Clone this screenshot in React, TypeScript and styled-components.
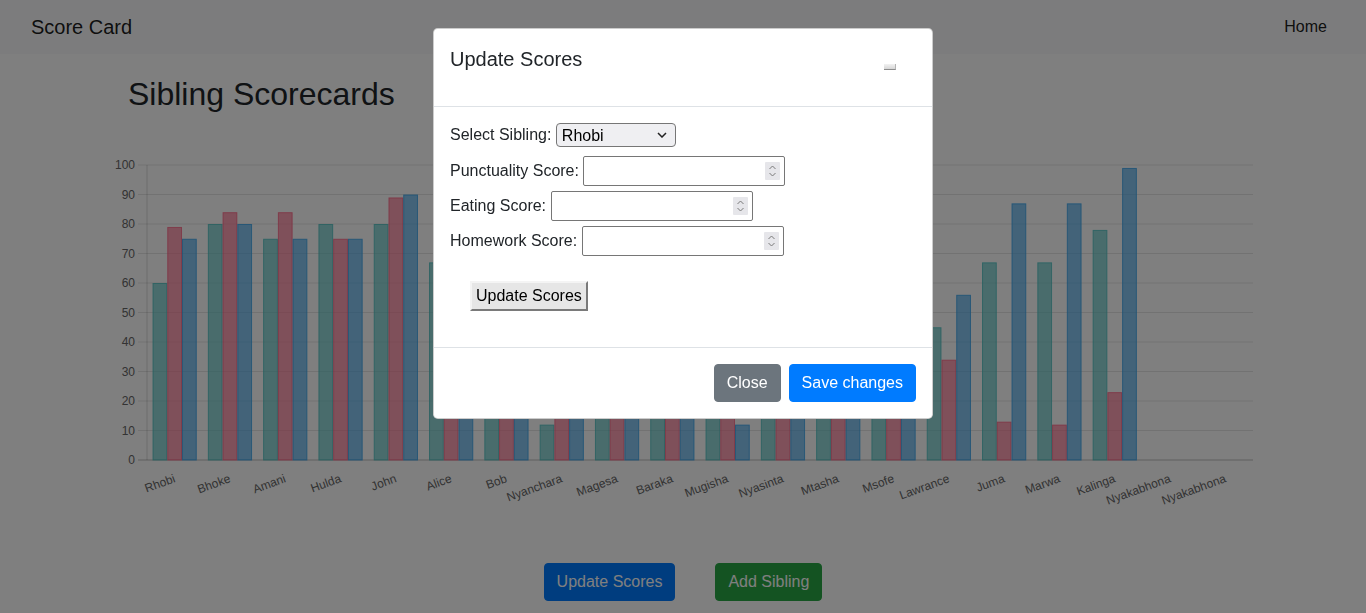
import React from 'react';
import styled, { createGlobalStyle } from 'styled-components';

const GlobalStyle = createGlobalStyle`
  *, *::before, *::after { box-sizing: border-box; }
  html, body { margin: 0; padding: 0; }
  body {
    font-family: "Liberation Sans", Arial, Helvetica, sans-serif;
    font-size: 16px;
    line-height: 1.5;
    color: #212529;
    background: #ffffff;
    overflow: hidden;
  }
  input[type="number"]::-webkit-inner-spin-button,
  input[type="number"]::-webkit-outer-spin-button {
    -webkit-appearance: none;
    margin: 0;
  }
`;

const NavBar = styled.nav`
  height: 54px;
  background: #f8f9fa;
  display: flex;
  align-items: center;
  justify-content: space-between;
  padding: 0 31px;
`;

const Brand = styled.a`
  font-size: 20px;
  line-height: 30px;
  color: rgba(0, 0, 0, 0.9);
  text-decoration: none;
`;

const NavLink = styled.a`
  font-size: 16px;
  line-height: 24px;
  padding: 8px 8px;
  color: rgba(0, 0, 0, 0.9);
  text-decoration: none;
`;

const Container = styled.main`
  width: 1140px;
  margin: 0 auto;
  padding: 21px 15px 0;
`;

const Title = styled.h2`
  margin: 0 0 4px;
  font-size: 32px;
  font-weight: 400;
  line-height: 1.2;
`;

const ChartBox = styled.div`
  margin: 0 -15px;
  height: 430px;
`;

const ChartSvg = styled.svg`
  display: block;
  font-family: "Liberation Sans", Arial, Helvetica, sans-serif;
  font-size: 12px;
`;

const ButtonRow = styled.div`
  display: flex;
  justify-content: center;
  gap: 40px;
  margin-top: 16px;
`;

const Btn = styled.button<{ $variant: 'primary' | 'success' | 'secondary' }>`
  font-family: inherit;
  font-size: 16px;
  line-height: 24px;
  padding: 6px 12px;
  border-radius: 4px;
  color: #ffffff;
  cursor: pointer;
  border: 1px solid
    ${(p) => (p.$variant === 'primary' ? '#007bff' : p.$variant === 'success' ? '#28a745' : '#6c757d')};
  background: ${(p) => (p.$variant === 'primary' ? '#007bff' : p.$variant === 'success' ? '#28a745' : '#6c757d')};
`;

const Backdrop = styled.div`
  position: fixed;
  inset: 0;
  z-index: 1040;
  background: rgba(0, 0, 0, 0.5);
`;

const ModalLayer = styled.div`
  position: fixed;
  inset: 0;
  z-index: 1050;
  padding-top: 28px;
`;

const Dialog = styled.div`
  width: 500px;
  margin: 0 auto;
  background: #ffffff;
  border: 1px solid rgba(0, 0, 0, 0.2);
  border-radius: 4.8px;
`;

const Header = styled.div`
  height: 78px;
  display: flex;
  align-items: flex-start;
  justify-content: space-between;
  padding: 16px;
  border-bottom: 1px solid #dee2e6;
`;

const ModalTitle = styled.h5`
  margin: 2px 0 0;
  font-size: 20px;
  font-weight: 400;
  line-height: 25px;
`;

const CloseBtn = styled.button`
  width: 12px;
  height: 6px;
  margin: 19px 20px 0 0;
  padding: 0;
  border: none;
  border-bottom: 1px solid #8c8c8c;
  border-right: 1px solid #b5b5b5;
  background: linear-gradient(#f2f2f2, #d6d6d6);
`;

const Body = styled.div`
  padding: 16px;
`;

const Row = styled.div<{ $mt: number }>`
  display: flex;
  align-items: center;
  gap: 4.45px;
  margin-top: ${(p) => p.$mt}px;
`;

const Label = styled.label`
  font-size: 16px;
  line-height: 24px;
  color: #212529;
`;

const SelectWrap = styled.div`
  position: relative;
  width: 120px;
  height: 24px;
`;

const Select = styled.select`
  appearance: none;
  -webkit-appearance: none;
  width: 120px;
  height: 24px;
  padding: 0 0 0 5px;
  font-family: inherit;
  font-size: 16px;
  color: #000;
  background: #efeff2;
  border: 1px solid #767676;
  border-radius: 4px;
`;

const Chevron = styled.svg`
  position: absolute;
  right: 9px;
  top: 9px;
  pointer-events: none;
`;

const NumberWrap = styled.div`
  position: relative;
  width: 202px;
  height: 30px;
`;

const NumberInput = styled.input`
  width: 202px;
  height: 30px;
  padding: 1px 24px 1px 4px;
  font-family: inherit;
  font-size: 16px;
  border: 1px solid #767676;
  border-radius: 2px;
  background: #ffffff;
  -moz-appearance: textfield;
`;

const Spinner = styled.svg`
  position: absolute;
  right: 5px;
  top: 6px;
  pointer-events: none;
`;

const FormButtonWrap = styled.div`
  margin-top: 5px;
  padding: 20px;
`;

const FormButton = styled.button`
  height: 30px;
  padding: 0 4px;
  font-family: inherit;
  font-size: 16px;
  color: #000;
  background: #e6e6e6;
  border-style: solid;
  border-width: 2px;
  border-color: #f4f4f4 #7a7a7a #7a7a7a #f4f4f4;
`;

const Footer = styled.div`
  display: flex;
  justify-content: flex-end;
  gap: 8px;
  padding: 16px;
  border-top: 1px solid #dee2e6;
`;

const names = [
  'Rhobi', 'Bhoke', 'Amani', 'Hulda', 'John', 'Alice', 'Bob', 'Nyanchara', 'Magesa', 'Baraka',
  'Mugisha', 'Nyasinta', 'Mtasha', 'Msofe', 'Lawrance', 'Juma', 'Marwa', 'Kalinga', 'Nyakabhona', 'Nyakabhona',
];
const punctuality = [60, 80, 75, 80, 80, 67, 75, 12, 80, 70, 80, 65, 75, 70, 45, 67, 67, 78, 0, 0];
const eating = [79, 84, 84, 75, 89, 70, 80, 60, 70, 80, 75, 70, 80, 60, 34, 13, 12, 23, 0, 0];
const homework = [75, 80, 75, 75, 90, 80, 70, 70, 75, 60, 12, 80, 70, 80, 56, 87, 87, 99, 0, 0];

const series = [
  { data: punctuality, fill: 'rgba(75,192,192,0.6)', stroke: 'rgba(75,192,192,0.8)' },
  { data: eating, fill: 'rgba(255,99,132,0.6)', stroke: 'rgba(255,99,132,0.8)' },
  { data: homework, fill: 'rgba(54,162,235,0.6)', stroke: 'rgba(54,162,235,0.8)' },
];

const X0 = 147;
const X1 = 1253;
const Y0 = 460;
const UNIT = 2.95;
const CW = (X1 - X0) / names.length;
const BW = (CW * 0.8) / 3;

function Chart() {
  const ticks = [0, 10, 20, 30, 40, 50, 60, 70, 80, 90, 100];
  return (
    <ChartSvg width={1140} height={430} viewBox="113 117 1140 430">
      {ticks.map((t) => {
        const y = Y0 - t * UNIT;
        return (
          <g key={t}>
            <line x1={138} x2={X1} y1={y} y2={y} stroke={t === 0 ? 'rgba(0,0,0,0.25)' : 'rgba(0,0,0,0.1)'} strokeWidth={1} />
            <text x={135} y={y} textAnchor="end" dominantBaseline="central" fill="#666">
              {t}
            </text>
          </g>
        );
      })}
      <line x1={X0} x2={X0} y1={Y0 - 100 * UNIT} y2={Y0} stroke="rgba(0,0,0,0.15)" strokeWidth={1} />
      {names.map((n, i) => {
        const start = X0 + i * CW + CW * 0.1;
        return (
          <g key={i}>
            {series.map((s, k) => {
              const v = s.data[i];
              if (!v) return null;
              const h = v * UNIT;
              return (
                <rect
                  key={k}
                  x={start + k * BW + 0.5}
                  y={Y0 - h + 0.5}
                  width={BW - 1}
                  height={h - 0.5}
                  fill={s.fill}
                  stroke={s.stroke}
                  strokeWidth={1}
                />
              );
            })}
          </g>
        );
      })}
      {names.map((n, i) => {
        const cx = X0 + i * CW + CW / 2;
        return (
          <text
            key={`l${i}`}
            x={cx}
            y={478}
            textAnchor="end"
            dominantBaseline="central"
            fill="#666"
            transform={`rotate(-20 ${cx} 478)`}
          >
            {n}
          </text>
        );
      })}
    </ChartSvg>
  );
}

function SpinIcon() {
  return (
    <Spinner width={15} height={18} viewBox="0 0 15 18">
      <rect x={0} y={0} width={15} height={18} rx={1} fill="#e6e6ea" />
      <path d="M4.5 7 L7.5 4 L10.5 7" fill="none" stroke="#7a7a7a" strokeWidth={1} />
      <path d="M4.5 11 L7.5 14 L10.5 11" fill="none" stroke="#7a7a7a" strokeWidth={1} />
    </Spinner>
  );
}

function NumberField({ id }: { id: string }) {
  return (
    <NumberWrap>
      <NumberInput id={id} type="number" />
      <SpinIcon />
    </NumberWrap>
  );
}

export default function App() {
  return (
    <>
      <GlobalStyle />
      <NavBar>
        <Brand href="#">Score Card</Brand>
        <NavLink href="#">Home</NavLink>
      </NavBar>
      <Container>
        <Title>Sibling Scorecards</Title>
        <ChartBox>
          <Chart />
        </ChartBox>
        <ButtonRow>
          <Btn $variant="primary">Update Scores</Btn>
          <Btn $variant="success">Add Sibling</Btn>
        </ButtonRow>
      </Container>
      <Backdrop />
      <ModalLayer>
        <Dialog>
          <Header>
            <ModalTitle>Update Scores</ModalTitle>
            <CloseBtn aria-label="Close" />
          </Header>
          <Body>
            <Row $mt={0}>
              <Label htmlFor="sib">Select Sibling:</Label>
              <SelectWrap>
                <Select id="sib" defaultValue="Rhobi">
                  {names.slice(0, 18).map((n) => (
                    <option key={n} value={n}>
                      {n}
                    </option>
                  ))}
                </Select>
                <Chevron width={10} height={6} viewBox="0 0 10 6">
                  <path d="M1 1 L5 5 L9 1" fill="none" stroke="#222" strokeWidth={1.5} />
                </Chevron>
              </SelectWrap>
            </Row>
            <Row $mt={9}>
              <Label htmlFor="p">Punctuality Score:</Label>
              <NumberField id="p" />
            </Row>
            <Row $mt={5}>
              <Label htmlFor="e">Eating Score:</Label>
              <NumberField id="e" />
            </Row>
            <Row $mt={5}>
              <Label htmlFor="h">Homework Score:</Label>
              <NumberField id="h" />
            </Row>
            <FormButtonWrap>
              <FormButton>Update Scores</FormButton>
            </FormButtonWrap>
          </Body>
          <Footer>
            <Btn $variant="secondary">Close</Btn>
            <Btn $variant="primary">Save changes</Btn>
          </Footer>
        </Dialog>
      </ModalLayer>
    </>
  );
}
